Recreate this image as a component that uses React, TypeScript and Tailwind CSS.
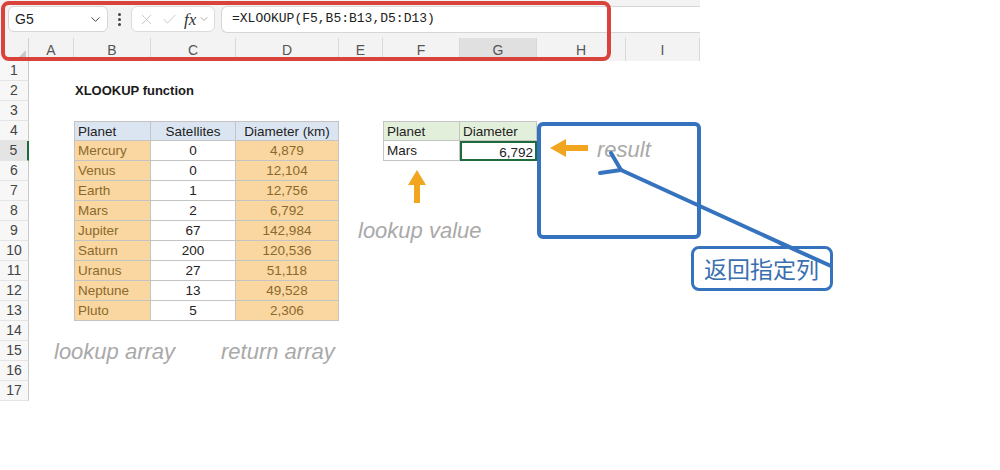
import React from "react";
import { ChevronDown, X, Check } from "lucide-react";

const cols = ["A", "B", "C", "D", "E", "F", "G", "H", "I"];

const planets: [string, string, string][] = [
  ["Mercury", "0", "4,879"],
  ["Venus", "0", "12,104"],
  ["Earth", "1", "12,756"],
  ["Mars", "2", "6,792"],
  ["Jupiter", "67", "142,984"],
  ["Saturn", "200", "120,536"],
  ["Uranus", "27", "51,118"],
  ["Neptune", "13", "49,528"],
  ["Pluto", "5", "2,306"],
];

// content + style of one sheet cell (r = row 1..17, c = 1..9 for A..I)
function Cell({ r, c }: { r: number; c: number }) {
  const base = "h-[20px] leading-[19px] text-[13.5px] whitespace-nowrap px-[3px]";

  if (r === 2 && c === 2) {
    return <div className={`${base} font-bold text-[13px] text-[#1a1a1a] overflow-visible !px-[1px]`}>XLOOKUP function</div>;
  }

  // lookup table B4:D13
  if (r >= 4 && r <= 13 && c >= 2 && c <= 4) {
    const edge = `border-r border-b border-[#c4c4c4] ${r === 4 ? "border-t" : ""} ${c === 2 ? "border-l" : ""}`;
    if (r === 4) {
      const label = ["Planet", "Satellites", "Diameter (km)"][c - 2];
      return (
        <div className={`${base} ${edge} bg-[#dbe5f1] text-[#222] ${c === 2 ? "text-left" : "text-center"}`}>{label}</div>
      );
    }
    const row = planets[r - 5];
    if (c === 3) {
      return <div className={`${base} ${edge} bg-white text-[#222] text-center`}>{row[1]}</div>;
    }
    return (
      <div className={`${base} ${edge} bg-[#fad6a0] text-[#8a6a2c] ${c === 2 ? "text-left" : "text-center"}`}>
        {c === 2 ? row[0] : row[2]}
      </div>
    );
  }

  // result table F4:G5
  if ((r === 4 || r === 5) && (c === 6 || c === 7)) {
    const edge = `border-r border-b border-[#c4c4c4] ${r === 4 ? "border-t" : ""} ${c === 6 ? "border-l" : ""}`;
    if (r === 4) {
      return <div className={`${base} ${edge} bg-[#e2efda] text-[#222]`}>{c === 6 ? "Planet" : "Diameter"}</div>;
    }
    if (c === 6) {
      return <div className={`${base} ${edge} bg-white text-[#222]`}>Mars</div>;
    }
    return (
      <div className={`${base} border-2 border-[#1e6b3c] bg-white text-[#222] text-right leading-[16px] !pr-[2px]`}>6,792</div>
    );
  }

  return <div className={base}></div>;
}

export default function App() {
  const rows = Array.from({ length: 17 }, (_, i) => i + 1);

  return (
    <div className="w-[1000px] h-[470px] bg-white relative overflow-hidden font-['Liberation_Sans',sans-serif]">
      <div className="w-[700px]">
        {/* Formula bar */}
        <div className="h-[38px] bg-[#f3f3f3] flex items-center pl-[8px]">
          <div className="w-[100px] h-[26px] bg-white border border-[#d6d6d6] rounded-md flex items-center justify-between pl-[6px] pr-[4px]">
            <span className="text-[14px] text-[#222]">G5</span>
            <ChevronDown size={15} strokeWidth={1.6} className="text-[#444]" />
          </div>
          <div className="w-[23px] flex flex-col items-center gap-[2px]">
            <span className="w-[3px] h-[3px] rounded-full bg-[#444]"></span>
            <span className="w-[3px] h-[3px] rounded-full bg-[#444]"></span>
            <span className="w-[3px] h-[3px] rounded-full bg-[#444]"></span>
          </div>
          <div className="w-[84px] h-[26px] bg-white border border-[#dcdcdc] rounded-md flex items-center pl-[6px] gap-[6px]">
            <X size={17} strokeWidth={1.2} className="text-[#c0c0c0]" />
            <Check size={17} strokeWidth={1.2} className="text-[#c0c0c0]" />
            <span className="font-['Liberation_Serif',serif] italic text-[17px] text-[#333] leading-none">fx</span>
            <ChevronDown size={12} strokeWidth={1.4} className="text-[#888] -ml-[4px]" />
          </div>
          <div className="flex-1 ml-[6px] h-[27px] bg-white border border-r-0 border-[#d6d6d6] rounded-l-md flex items-center pl-[10px]">
            <span className="font-['Liberation_Mono',monospace] text-[13px] text-[#222]">=XLOOKUP(F5,B5:B13,D5:D13)</span>
          </div>
        </div>

        {/* Sheet */}
        <div className="grid grid-cols-[29px_45px_77px_85px_103px_44px_77px_77px_89px_74px]">
          {/* column headers */}
          <div className="h-[23px] bg-[#f3f3f3] border-r border-[#d0d0d0] flex items-end justify-end p-[2px]">
            <div className="w-0 h-0 border-l-[9px] border-l-transparent border-b-[9px] border-b-[#c9c9c9]"></div>
          </div>
          {cols.map((c) => (
            <div
              key={c}
              className={`h-[23px] border-r border-[#d8d8d8] flex items-center justify-center pt-[2px] text-[14px] text-[#555] ${
                c === "G" ? "bg-[#e0e0e0]" : "bg-[#f3f3f3]"
              }`}
            >
              {c}
            </div>
          ))}

          {rows.map((r) => (
            <React.Fragment key={r}>
              <div
                className={`h-[20px] flex items-center justify-center text-[14px] text-[#444] border-b border-[#e4e4e4] ${
                  r === 5 ? "bg-[#e4e4e4] border-r-2 border-r-[#1e6b3c]" : "bg-[#f7f7f7] border-r border-r-[#c8c8c8]"
                }`}
              >
                {r}
              </div>
              {cols.map((_, ci) => (
                <Cell key={ci} r={r} c={ci + 1} />
              ))}
            </React.Fragment>
          ))}
        </div>
      </div>

      {/* Red highlight over formula bar */}
      <div className="absolute left-[1px] top-[1px] w-[610px] h-[60px] border-4 border-[#d8433c] rounded-lg pointer-events-none"></div>

      {/* Handwritten notes */}
      <span className="absolute left-[54px] top-[335px] italic text-[22px] text-[#a9a9a9]">lookup array</span>
      <span className="absolute left-[221px] top-[335px] italic text-[22px] text-[#a9a9a9]">return array</span>
      <span className="absolute left-[358px] top-[214px] italic text-[22px] text-[#a9a9a9]">lookup value</span>
      <span className="absolute left-[597px] top-[133px] italic text-[22px] text-[#a9a9a9]">result</span>

      {/* Blue result box */}
      <div className="absolute left-[537px] top-[122px] w-[164px] h-[117px] border-4 border-[#3673bf] rounded-md"></div>

      {/* Arrows and pointer line */}
      <svg className="absolute left-0 top-0 pointer-events-none" width="1000" height="470">
        <g fill="#f2a51e">
          <polygon points="550,148 566,139 566,145 588,145 588,151 566,151 566,157" />
          <polygon points="417,170 408,185 414,185 414,203 420,203 420,185 426,185" />
        </g>
        <g stroke="#3673bf" strokeWidth="4" strokeLinecap="round" fill="none">
          <line x1="611" y1="153" x2="621" y2="170" />
          <line x1="600" y1="173" x2="621" y2="170" />
          <line x1="621" y1="170" x2="831" y2="266" />
        </g>
      </svg>

      {/* Chinese label */}
      <div className="absolute left-[691px] top-[246px] w-[142px] h-[45px] border-[3px] border-[#3673bf] rounded-lg bg-white flex items-center pl-[10px]">
        <span className="font-['Noto_Sans_CJK_SC',sans-serif] text-[23px] text-[#3a6fb0] leading-none">返回指定列</span>
      </div>
      <svg className="absolute left-0 top-0 pointer-events-none" width="1000" height="470">
        <line x1="780" y1="243" x2="831" y2="266" stroke="#3673bf" strokeWidth="4" strokeLinecap="round" />
      </svg>
    </div>
  );
}
